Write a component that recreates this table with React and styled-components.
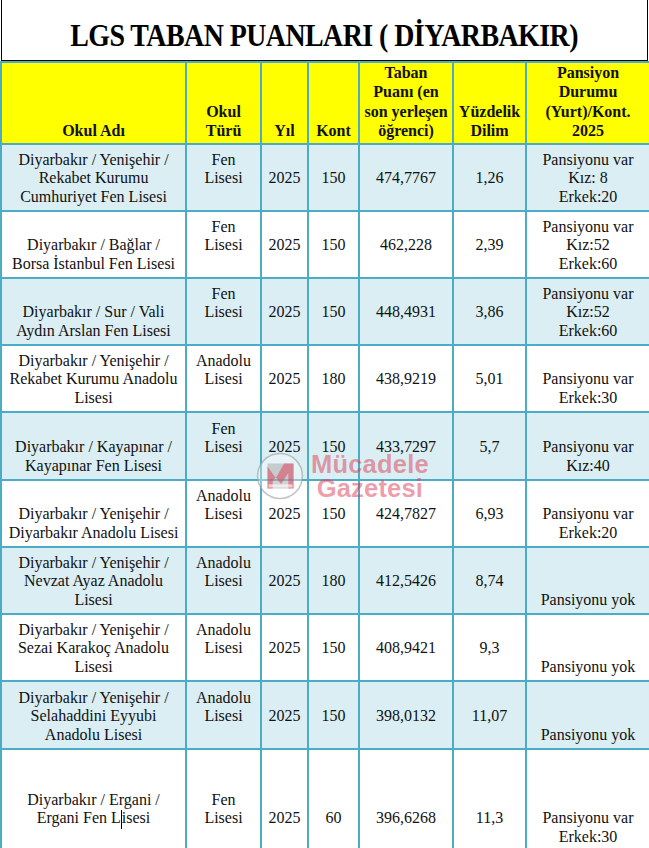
import React from 'react'
import styled, { createGlobalStyle } from 'styled-components'

const GlobalStyle = createGlobalStyle`
  html, body {
    margin: 0;
    padding: 0;
    background: #ffffff;
  }
  body {
    font-family: "Liberation Serif", "Times New Roman", serif;
    color: #000000;
  }
`

const Page = styled.div`
  width: 649px;
  overflow: hidden;
`

const TitleBox = styled.div`
  box-sizing: border-box;
  height: 61px;
  margin: 0 1px;
  border: 1px solid #000000;
  border-top: none;
  display: flex;
  align-items: center;
  justify-content: center;
  padding-top: 11px;
`

const Title = styled.h1`
  margin: 0;
  font-family: "Liberation Serif", "Times New Roman", serif;
  font-size: 31px;
  font-weight: bold;
  letter-spacing: -0.6px;
  white-space: nowrap;
  transform: scaleX(0.9);
`

const TableWrap = styled.div`
  position: relative;
`

const Table = styled.table`
  width: 649px;
  table-layout: fixed;
  border-collapse: collapse;
  font-family: "Liberation Serif", "Times New Roman", serif;
  font-size: 16px;
  color: #111111;
`

const HeadRow = styled.tr`
  height: 82px;
  background: #ffff00;
`

const HeadCell = styled.th`
  border: 2px solid #4bacc6;
  padding: 0 1px 3px;
  vertical-align: bottom;
  text-align: center;
  font-weight: bold;
  line-height: 19.3px;
  white-space: nowrap;
`

const Row = styled.tr`
  height: ${p => p.$h}px;
  background: ${p => (p.$shaded ? '#daeef3' : '#ffffff')};
`

const Cell = styled.td`
  border: 2px solid #4bacc6;
  padding: 0 1px ${p => 4 + (p.$lift || 0) * 18.5}px;
  vertical-align: bottom;
  text-align: center;
  line-height: 18.5px;
  white-space: nowrap;
`

const Caret = styled.span`
  display: inline-block;
  width: 0;
  height: 19px;
  margin-bottom: -6px;
  border-left: 1px solid #000000;
`

const Watermark = styled.div`
  position: absolute;
  left: 256px;
  top: 391px;
  display: flex;
  align-items: center;
  gap: 7px;
  pointer-events: none;
`

const WatermarkText = styled.div`
  font-family: "Liberation Sans", Arial, sans-serif;
  font-weight: bold;
  font-size: 25.5px;
  line-height: 24px;
  color: rgba(220, 62, 86, 0.5);
  text-align: center;
  letter-spacing: 0.2px;
`

const columns = [185, 75, 47, 51, 94, 73, 124]

const heights = [67, 67, 67, 67, 68, 67, 67, 67, 68, 102]

const headers = [
  ['Okul Adı'],
  ['Okul', 'Türü'],
  ['Yıl'],
  ['Kont'],
  ['Taban', 'Puanı (en', 'son yerleşen', 'öğrenci)'],
  ['Yüzdelik', 'Dilim'],
  ['Pansiyon', 'Durumu', '(Yurt)/Kont.', '2025'],
]

const schools = [
  {
    name: ['Diyarbakır / Yenişehir /', 'Rekabet Kurumu', 'Cumhuriyet Fen Lisesi'],
    type: ['Fen', 'Lisesi'], kont: '150', puan: '474,7767', dilim: '1,26',
    pans: ['Pansiyonu var', 'Kız: 8', 'Erkek:20'],
  },
  {
    name: ['Diyarbakır / Bağlar /', 'Borsa İstanbul Fen Lisesi'],
    type: ['Fen', 'Lisesi'], kont: '150', puan: '462,228', dilim: '2,39',
    pans: ['Pansiyonu var', 'Kız:52', 'Erkek:60'],
  },
  {
    name: ['Diyarbakır / Sur / Vali', 'Aydın Arslan Fen Lisesi'],
    type: ['Fen', 'Lisesi'], kont: '150', puan: '448,4931', dilim: '3,86',
    pans: ['Pansiyonu var', 'Kız:52', 'Erkek:60'],
  },
  {
    name: ['Diyarbakır / Yenişehir /', 'Rekabet Kurumu Anadolu', 'Lisesi'],
    type: ['Anadolu', 'Lisesi'], kont: '180', puan: '438,9219', dilim: '5,01',
    pans: ['Pansiyonu var', 'Erkek:30'],
  },
  {
    name: ['Diyarbakır / Kayapınar /', 'Kayapınar Fen Lisesi'],
    type: ['Fen', 'Lisesi'], kont: '150', puan: '433,7297', dilim: '5,7',
    pans: ['Pansiyonu var', 'Kız:40'],
  },
  {
    name: ['Diyarbakır / Yenişehir /', 'Diyarbakır Anadolu Lisesi'],
    type: ['Anadolu', 'Lisesi'], kont: '150', puan: '424,7827', dilim: '6,93',
    pans: ['Pansiyonu var', 'Erkek:20'],
  },
  {
    name: ['Diyarbakır / Yenişehir /', 'Nevzat Ayaz Anadolu', 'Lisesi'],
    type: ['Anadolu', 'Lisesi'], kont: '180', puan: '412,5426', dilim: '8,74',
    pans: ['Pansiyonu yok'],
  },
  {
    name: ['Diyarbakır / Yenişehir /', 'Sezai Karakoç Anadolu', 'Lisesi'],
    type: ['Anadolu', 'Lisesi'], kont: '150', puan: '408,9421', dilim: '9,3',
    pans: ['Pansiyonu yok'],
  },
  {
    name: ['Diyarbakır / Yenişehir /', 'Selahaddini Eyyubi', 'Anadolu Lisesi'],
    type: ['Anadolu', 'Lisesi'], kont: '150', puan: '398,0132', dilim: '11,07',
    pans: ['Pansiyonu yok'],
  },
  {
    name: ['Diyarbakır / Ergani /', <>Ergani Fen L<Caret />isesi</>],
    type: ['Fen', 'Lisesi'], kont: '60', puan: '396,6268', dilim: '11,3',
    pans: ['Pansiyonu var', 'Erkek:30'], tall: true,
  },
]

const Lines = ({ lines }) =>
  lines.map((line, i) => (
    <React.Fragment key={i}>
      {i > 0 && <br />}
      {line}
    </React.Fragment>
  ))

const Logo = () => (
  <svg width="48" height="48" viewBox="0 0 46 46">
    <circle cx="23" cy="23" r="21.5" fill="rgba(255,255,255,0.35)" stroke="rgba(150,150,150,0.55)" strokeWidth="1.5" />
    <rect x="11" y="11" width="25" height="24" fill="rgba(130,130,130,0.35)" />
    <path d="M11 35 L11 14 L19 25 L27 11 L36 11 L36 35 L31 35 L31 20 L24 31 L19 24 L16 28 L16 35 Z" fill="rgba(222,70,92,0.55)" />
    <rect x="12" y="31" width="23" height="3" fill="rgba(255,255,255,0.6)" />
  </svg>
)

export default function App() {
  return (
    <Page>
      <GlobalStyle />
      <TitleBox>
        <Title>LGS TABAN PUANLARI ( DİYARBAKIR)</Title>
      </TitleBox>
      <TableWrap>
        <Table>
          <colgroup>
            {columns.map((w, i) => <col key={i} style={{ width: w }} />)}
          </colgroup>
          <thead>
            <HeadRow>
              {headers.map((h, i) => (
                <HeadCell key={i}><Lines lines={h} /></HeadCell>
              ))}
            </HeadRow>
          </thead>
          <tbody>
            {schools.map((s, i) => (
              <Row key={i} $shaded={i % 2 === 0} $h={heights[i]}>
                <Cell $lift={s.tall ? 1 : 0}><Lines lines={s.name} /></Cell>
                <Cell $lift={1}><Lines lines={s.type} /></Cell>
                <Cell $lift={1}>2025</Cell>
                <Cell $lift={1}>{s.kont}</Cell>
                <Cell $lift={1}>{s.puan}</Cell>
                <Cell $lift={1}>{s.dilim}</Cell>
                <Cell><Lines lines={s.pans} /></Cell>
              </Row>
            ))}
          </tbody>
        </Table>
        <Watermark>
          <Logo />
          <WatermarkText>Mücadele<br />Gazetesi</WatermarkText>
        </Watermark>
      </TableWrap>
    </Page>
  )
}
